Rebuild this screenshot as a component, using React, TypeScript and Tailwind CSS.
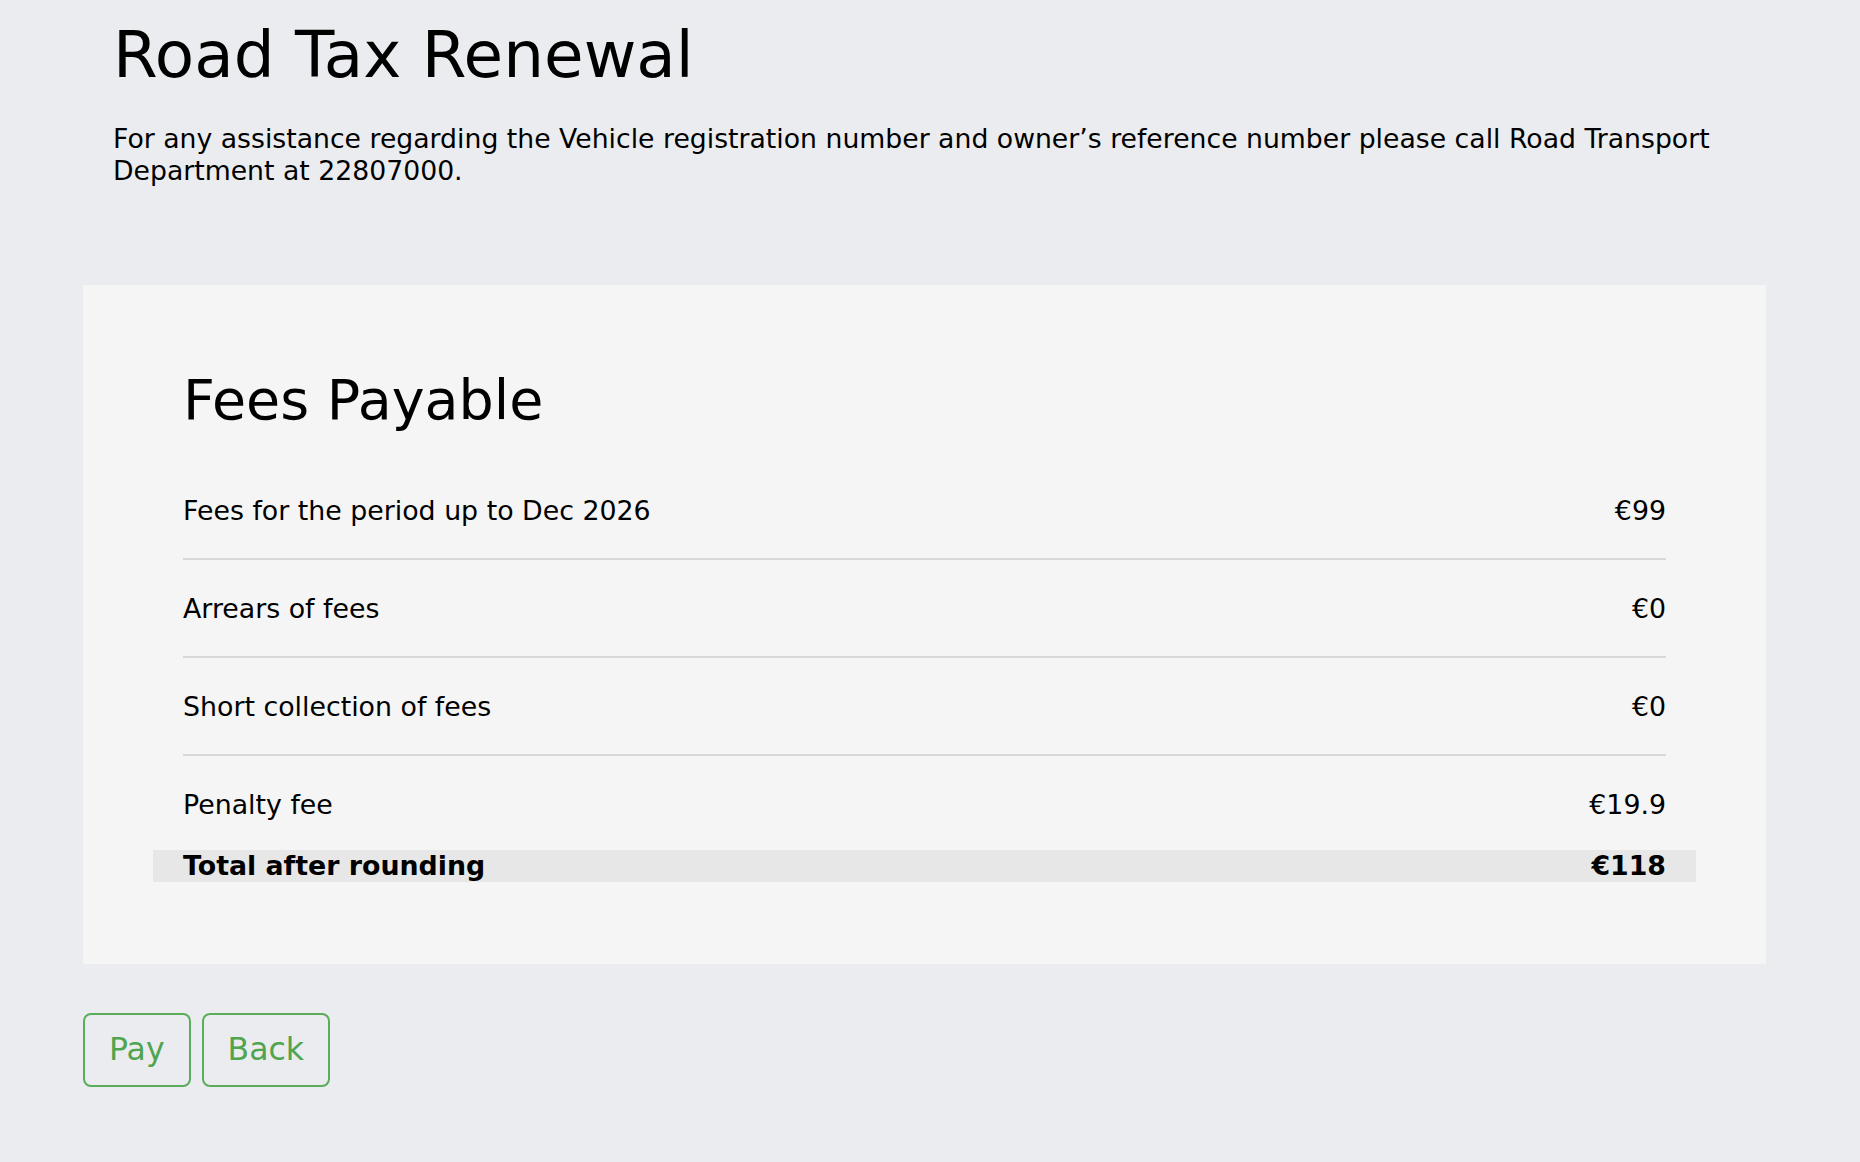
const fees = [
  { label: 'Fees for the period up to Dec 2026', amount: '€99' },
  { label: 'Arrears of fees', amount: '€0' },
  { label: 'Short collection of fees', amount: '€0' },
  { label: 'Penalty fee', amount: '€19.9' },
];

export default function App() {
  return (
    <div className="min-h-[1162px] bg-[#ebecef] text-black font-['DejaVu_Sans',sans-serif]">
      <div className="pl-[83px] pr-[94px] pt-[18px] pb-16">
        {/* Header */}
        <div className="px-[30px]">
          <h1 className="text-[64.4px] leading-[74px] font-normal">Road Tax Renewal</h1>
          <p className="mt-[31px] text-[26.7px] leading-[32px]">
            For any assistance regarding the Vehicle registration number and owner’s reference number please call Road Transport Department at 22807000.
          </p>
        </div>

        {/* Fees card */}
        <div className="mt-[98px] bg-[#f5f5f5] px-[100px] pt-[82px] pb-[82px]">
          <h2 className="text-[55.5px] leading-[65px] font-normal">Fees Payable</h2>
          <div className="mt-[63px]">
            {fees.map((fee, i) => {
              const first = i === 0;
              const last = i === fees.length - 1;
              return (
                <div
                  key={fee.label}
                  className={`flex justify-between text-[26.8px] leading-[31px] ${first ? 'pt-0' : 'pt-[33px]'} ${
                    last ? 'pb-[30px]' : 'pb-[32px] border-b-2 border-[#d8d8d8]'
                  }`}
                >
                  <span>{fee.label}</span>
                  <span>{fee.amount}</span>
                </div>
              );
            })}
            <div className="-mx-[30px] px-[30px] flex justify-between bg-[#e7e7e7] text-[26.8px] leading-[32px] font-bold">
              <span>Total after rounding</span>
              <span>€118</span>
            </div>
          </div>
        </div>

        {/* Actions */}
        <div className="mt-[49px] flex gap-[11px]">
          <button className="h-[74px] px-[24px] rounded-[8px] border-2 border-[#5aad5a] text-[#4fa44f] text-[31.5px] leading-none">
            Pay
          </button>
          <button className="h-[74px] px-[24px] rounded-[8px] border-2 border-[#5aad5a] text-[#4fa44f] text-[31.5px] leading-none">
            Back
          </button>
        </div>
      </div>
    </div>
  );
}
